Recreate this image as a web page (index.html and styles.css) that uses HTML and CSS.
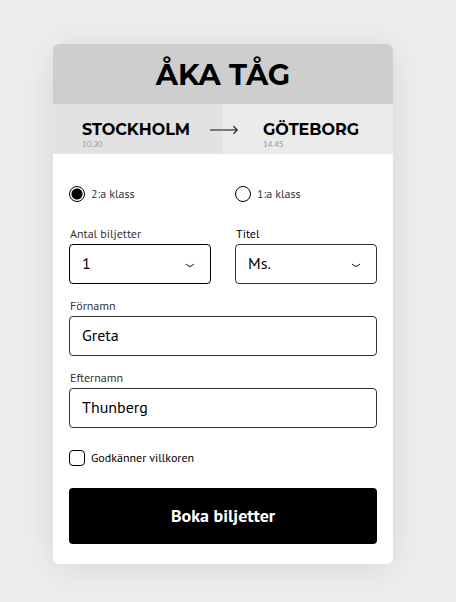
FILE: index.html
```html
<!DOCTYPE html>
<html lang="sv">
<head>
<meta charset="utf-8">
<meta name="viewport" content="width=device-width, initial-scale=1">
<title>Åka tåg</title>
<link rel="stylesheet" href="styles.css">
</head>
<body>
<main class="card">
  <h1 class="title">ÅKA TÅG</h1>
  <div class="route">
    <div class="stop stop-from">
      <span class="city">STOCKHOLM</span>
      <span class="time">10.30</span>
    </div>
    <div class="stop stop-to">
      <span class="city">GÖTEBORG</span>
      <span class="time">14.45</span>
    </div>
    <svg class="arrow" width="28" height="10" viewBox="0 0 28 10" aria-hidden="true">
      <path d="M0 5H27" stroke="#555" stroke-width="1.5"/>
      <path d="M23.5 1.2L27.3 5L23.5 8.8" stroke="#111" stroke-width="1.1" fill="none"/>
    </svg>
  </div>
  <form class="form">
    <div class="columns">
      <label class="choice"><input type="radio" name="class" checked>2:a klass</label>
      <label class="choice"><input type="radio" name="class">1:a klass</label>
    </div>
    <div class="fields">
      <div class="columns">
        <div class="field">
          <label for="count">Antal biljetter</label>
          <div class="select strong">
            <select id="count"><option>1</option></select>
            <svg class="chevron" width="10" height="5" viewBox="0 0 10 5" aria-hidden="true"><path d="M1 1C2.4 2.2 3.6 3.3 5 3.3S7.6 2.2 9 1"/></svg>
          </div>
        </div>
        <div class="field">
          <label class="dark" for="salutation">Titel</label>
          <div class="select">
            <select id="salutation"><option>Ms.</option></select>
            <svg class="chevron" width="10" height="5" viewBox="0 0 10 5" aria-hidden="true"><path d="M1 1C2.4 2.2 3.6 3.3 5 3.3S7.6 2.2 9 1"/></svg>
          </div>
        </div>
      </div>
      <div class="field">
        <label for="first">Förnamn</label>
        <input type="text" id="first" value="Greta">
      </div>
      <div class="field">
        <label for="last">Efternamn</label>
        <input type="text" id="last" value="Thunberg">
      </div>
    </div>
    <label class="choice dark"><input type="checkbox">Godkänner villkoren</label>
    <button class="submit" type="submit">Boka biljetter</button>
  </form>
</main>
</body>
</html>
```

FILE: styles.css
```css
* {
  box-sizing: border-box;
}

body {
  margin: 0;
  padding: 44px 63px 38px 53px;
  background: #eee;
  color: #000;
  font-family: "PT Sans", "Noto Sans", sans-serif;
}

.card {
  overflow: hidden;
  border-radius: 6px;
  background: #fff;
  box-shadow: 0 4px 40px rgba(0, 0, 0, 0.1);
}

.title {
  margin: 0;
  padding-top: 2px;
  background: #cecece;
  font: 700 29px/58px Gotham, Montserrat, Lato, sans-serif;
  text-align: center;
}

.route {
  position: relative;
  display: grid;
  grid-template-columns: 1fr 1fr;
}

.stop {
  display: flex;
  flex-direction: column;
  height: 50px;
  padding-top: 16px;
}

.stop-from {
  padding-left: 29px;
  background: #e2e2e2;
}

.stop-to {
  padding-left: 40px;
  background: #ebebeb;
}

.city {
  font: 700 16px/20px Gotham, Montserrat, Lato, sans-serif;
}

.time {
  color: #999;
  font: 8px/8px Lato, sans-serif;
}

.arrow {
  position: absolute;
  top: 21px;
  left: calc(50% - 13px);
}

.form {
  display: flex;
  flex-direction: column;
  gap: 22px;
  padding: 32px 16px 20px;
}

.columns {
  display: grid;
  grid-template-columns: 1fr 1fr;
  gap: 24px;
}

.choice {
  display: flex;
  align-items: center;
  gap: 6px;
  color: #333;
  font-size: 12px;
  line-height: 16px;
}

.choice input {
  width: 16px;
  height: 16px;
  margin: 0;
  appearance: none;
  border: 1px solid #000;
  background: #fff;
}

.choice input[type="radio"] {
  border-radius: 50%;
}

.choice input[type="radio"]:checked {
  background: radial-gradient(circle, #000 5px, #fff 6px);
}

.choice input[type="checkbox"] {
  border-radius: 4px;
}

.choice input[type="checkbox"]:checked {
  background: #000;
}

.fields {
  display: flex;
  flex-direction: column;
  gap: 12px;
}

.field label {
  display: block;
  padding-left: 1px;
  color: #333;
  font-size: 12px;
  line-height: 20px;
}

.choice.dark,
.field .dark {
  color: #000;
}

.select {
  position: relative;
}

.field input,
.field select {
  display: block;
  width: 100%;
  height: 40px;
  margin: 0;
  padding: 0 12px 2px;
  appearance: none;
  border: 1px solid #333;
  border-radius: 4px;
  background: #fff;
  color: #000;
  font-family: inherit;
  font-size: 16px;
}

.strong select {
  border-color: #000;
}

.chevron {
  position: absolute;
  top: 19px;
  right: 16px;
  fill: none;
  stroke: #111;
  pointer-events: none;
}

.submit {
  height: 56px;
  padding: 0 0 2px;
  border: 0;
  border-radius: 4px;
  background: #000;
  color: #fff;
  font-family: inherit;
  font-size: 18px;
  font-weight: 700;
}
```
